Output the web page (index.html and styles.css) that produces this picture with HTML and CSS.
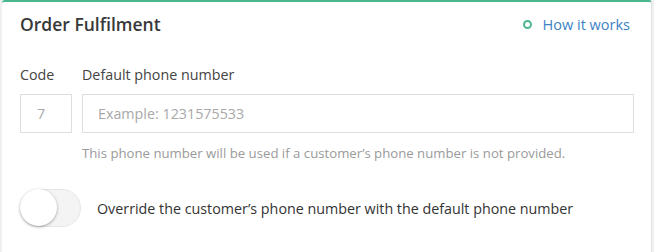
FILE: index.html
```html
<!DOCTYPE html>
<html>
<head>
<meta charset="utf-8">
<link rel="stylesheet" href="styles.css">
</head>
<body>
<div class="page">
  <section class="card">
    <header class="card-head">
      <h2 class="title">Order Fulfilment</h2>
      <a class="how" href="#"><span class="ring"></span>How it works</a>
    </header>
    <div class="fields">
      <div class="field code">
        <label class="label">Code</label>
        <div class="input code-input">7</div>
      </div>
      <div class="field phone">
        <label class="label">Default phone number</label>
        <div class="input phone-input">Example: 1231575533</div>
        <p class="help">This phone number will be used if a customer’s phone number is not provided.</p>
      </div>
    </div>
    <div class="toggle-row">
      <span class="switch"><span class="knob"></span></span>
      <span class="toggle-label">Override the customer’s phone number with the default phone number</span>
    </div>
  </section>
</div>
</body>
</html>
```
FILE: styles.css
```css
html, body {
  margin: 0;
  padding: 0;
  background: #ffffff;
}
body {
  font-family: "Open Sans", "Noto Sans", sans-serif;
  color: #333;
  width: 654px;
  height: 252px;
  overflow: hidden;
}
.page {
  background: #f0f0f0;
  padding-left: 2px;
  height: 252px;
}
.card {
  background: #fff;
  border-top: 2px solid #4cb68f;
  border-right: 1px solid #e2e2e2;
  border-radius: 3px 3px 0 0;
  width: 650px;
  height: 252px;
  box-sizing: border-box;
  padding: 0 17px 0 18px;
}
.card-head {
  display: flex;
  justify-content: space-between;
  align-items: center;
  height: 44px;
}
.title {
  margin: 0;
  font-size: 17.5px;
  font-weight: 600;
  color: #383838;
}
.how {
  display: flex;
  align-items: center;
  color: #3d82c4;
  text-decoration: none;
  font-size: 14.5px;
  margin-right: 4px;
}
.ring {
  width: 5px;
  height: 5px;
  border: 2px solid #4cb68f;
  border-radius: 50%;
  margin-right: 11px;
}
.fields {
  display: flex;
  gap: 10px;
  margin-top: 19px;
}
.label {
  display: block;
  font-size: 14.3px;
  color: #444;
  line-height: 20px;
  margin-bottom: 9px;
}
.input {
  box-sizing: border-box;
  height: 39px;
  border: 1px solid #dedede;
  font-size: 14.3px;
  color: #a8a8a8;
  display: flex;
  align-items: center;
}
.code-input {
  width: 52px;
  padding-left: 16px;
}
.phone {
  flex: 1;
}
.phone-input {
  padding-left: 15px;
}
.help {
  margin: 11px 0 0 0;
  font-size: 13.2px;
  color: #9a9a9a;
  line-height: 18px;
}
.toggle-row {
  display: flex;
  align-items: center;
  margin-top: 27px;
  gap: 16px;
}
.switch {
  box-sizing: border-box;
  width: 61px;
  height: 38px;
  border-radius: 19px;
  background: #f4f4f4;
  border: 1px solid #e6e6e6;
  position: relative;
  flex: none;
}
.knob {
  position: absolute;
  left: -1px;
  top: -1px;
  width: 37px;
  height: 37px;
  border-radius: 50%;
  background: #fff;
  box-shadow: 0 1px 3px rgba(0,0,0,0.35);
}
.toggle-label {
  font-size: 14.3px;
  color: #333;
}
```
